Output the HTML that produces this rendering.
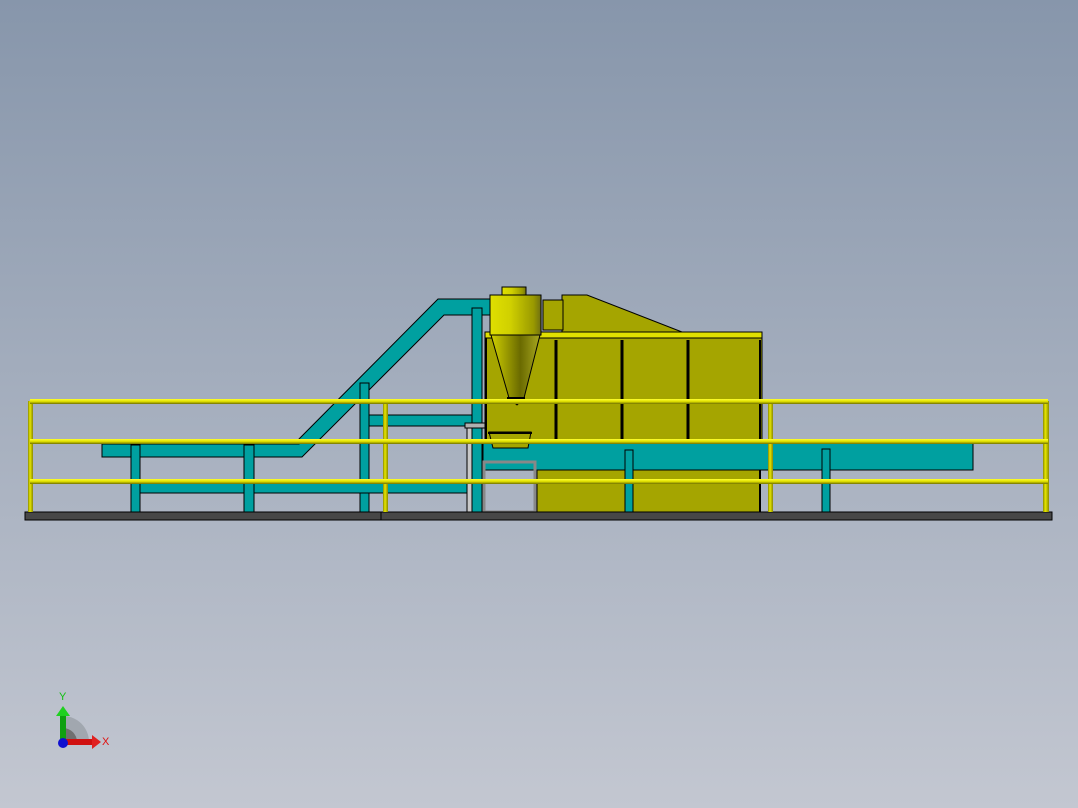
<!DOCTYPE html>
<html><head><style>
html,body{margin:0;padding:0}
body{width:1078px;height:808px;overflow:hidden;background:linear-gradient(#8796ab,#c3c7d1);}
svg{display:block}
</style></head><body>
<svg width="1078" height="808" viewBox="0 0 1078 808" xmlns="http://www.w3.org/2000/svg">
<defs>
<linearGradient id="cyl" x1="0" x2="1"><stop offset="0" stop-color="#e0e000"/><stop offset="0.4" stop-color="#d0d000"/><stop offset="0.85" stop-color="#9a9a00"/><stop offset="1" stop-color="#707010"/></linearGradient>
<linearGradient id="cone" x1="0" x2="1"><stop offset="0" stop-color="#d0d000"/><stop offset="0.6" stop-color="#6a6a00"/><stop offset="1" stop-color="#a8a820"/></linearGradient>
<linearGradient id="railh" x1="0" y1="0" x2="0" y2="1"><stop offset="0" stop-color="#ffff30"/><stop offset="0.5" stop-color="#e0e000"/><stop offset="1" stop-color="#707000"/></linearGradient>
<linearGradient id="railv" x1="0" x2="1"><stop offset="0" stop-color="#8a8a00"/><stop offset="0.4" stop-color="#e8e800"/><stop offset="1" stop-color="#8a8a00"/></linearGradient>
</defs>
<g stroke="#000" stroke-width="1">
<g fill="#00a0a0">
<polygon points="299,439 438,299 490,299 490,315 444,315 302,457 102,457 102,444 299,444"/>
<rect x="472" y="308" width="10" height="204"/>
<rect x="360" y="383" width="9" height="129"/>
<rect x="369" y="415" width="103" height="11"/>
<rect x="140" y="483" width="327" height="10"/>
<rect x="131" y="445" width="9" height="67"/>
<rect x="244" y="445" width="10" height="67"/>
</g>
<rect x="467" y="426" width="5" height="86" fill="#c8c8c8"/>
<rect x="465" y="423" width="20" height="5" fill="#b0b0b0"/>
<rect x="485" y="335" width="277" height="135" fill="#a5a500"/>
<rect x="537" y="470" width="223" height="42" fill="#a5a500"/>
<rect x="485" y="332" width="277" height="6" fill="#e0e000"/>
<line x1="556" y1="340" x2="556" y2="470" stroke-width="3"/>
<line x1="622" y1="340" x2="622" y2="470" stroke-width="3"/>
<line x1="688" y1="340" x2="688" y2="470" stroke-width="3"/>
<line x1="760" y1="340" x2="760" y2="512" stroke-width="2"/>
<line x1="486" y1="338" x2="486" y2="470" stroke-width="2"/>
<polygon points="562,295 587,295 682,332 562,332" fill="#a5a500"/>
<rect x="543" y="300" width="20" height="30" fill="#a5a500"/>
<rect x="502" y="287" width="24" height="9" fill="url(#cyl)"/>
<rect x="490" y="295" width="51" height="40" fill="url(#cyl)"/>
<polygon points="491,335 540,335 524,398 517,405 509,398" fill="url(#cone)"/>
<line x1="507" y1="398" x2="525" y2="398" stroke-width="2"/>
<rect x="483" y="443" width="490" height="27" fill="#00a0a0"/>
<polygon points="489,432 531,432 528,448 493,448" fill="#a5a500"/>
<line x1="488" y1="433" x2="532" y2="433" stroke-width="2"/>
<rect x="625" y="450" width="8" height="62" fill="#00a0a0"/>
<rect x="822" y="449" width="8" height="63" fill="#00a0a0"/>
<rect x="484" y="462" width="51" height="50" fill="none" stroke="#888" stroke-width="3"/>
<rect x="25" y="512" width="1027" height="8" fill="#474747"/>
<line x1="381" y1="512" x2="381" y2="520"/>
</g>
<g>
<rect x="28" y="401" width="5" height="111" fill="url(#railv)"/>
<rect x="383" y="401" width="5" height="111" fill="url(#railv)"/>
<rect x="768" y="401" width="5" height="111" fill="url(#railv)"/>
<rect x="1043" y="401" width="6" height="111" fill="url(#railv)"/>
<rect x="30" y="399" width="1018" height="5" fill="url(#railh)"/>
<rect x="30" y="439" width="1018" height="5" fill="url(#railh)"/>
<rect x="30" y="479" width="1018" height="5" fill="url(#railh)"/>
</g>
<path d="M63,742 L63,716 A26,26 0 0 1 89,742 Z" fill="#9aa0a8" opacity="0.8"/>
<path d="M63,742 L63,728 A14,14 0 0 1 77,742 Z" fill="#707070"/>
<rect x="60" y="714" width="6" height="28" fill="#10a010"/>
<polygon points="56,716 63,706 70,716" fill="#20d020"/>
<rect x="63" y="739" width="30" height="6" fill="#d01010"/>
<polygon points="92,735 101,742 92,749" fill="#e02020"/>
<circle cx="63" cy="743" r="5" fill="#1010d0"/>
<text x="59" y="700" font-family="Liberation Sans, sans-serif" font-size="11" fill="#10c010">Y</text>
<text x="102" y="745" font-family="Liberation Sans, sans-serif" font-size="11" fill="#e01010">X</text>
</svg>
</body></html>
